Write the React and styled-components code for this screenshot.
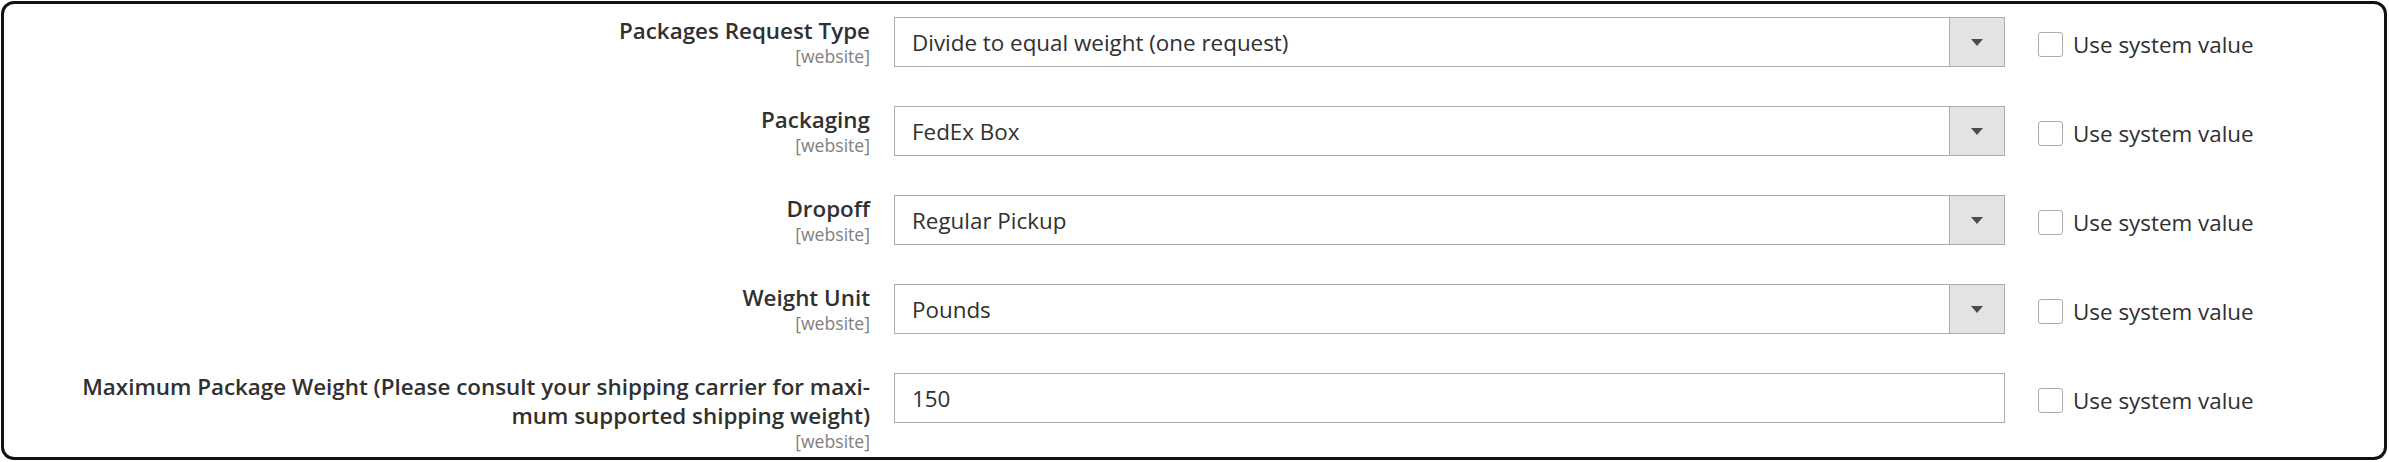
import React from "react";
import styled, { createGlobalStyle } from "styled-components";

const GlobalStyle = createGlobalStyle`
  html, body {
    margin: 0;
    padding: 0;
    background: #ffffff;
  }
  body {
    font-family: "Open Sans", "Liberation Sans", sans-serif;
    color: #303030;
  }
`;

// outer rounded frame around the config fieldset
const Frame = styled.div`
  box-sizing: border-box;
  width: 2386px;
  height: 459px;
  margin: 1px 0 0 1px;
  border: 3px solid #111;
  border-radius: 13px;
  background: #fff;
  padding-top: 13px;
  display: flex;
  flex-direction: column;
  gap: 37px;
`;

const Row = styled.div`
  display: grid;
  grid-template-columns: 866px 1111px auto;
  column-gap: 24px;
  align-items: start;
`;

const LabelCell = styled.div`
  box-sizing: border-box;
  padding-left: 50px;
  text-align: right;
`;

const LabelText = styled.div`
  font-size: 22.4px;
  line-height: 29px;
  font-weight: 600;
  color: #303030;
  margin-top: -1px;
`;

const Scope = styled.div`
  font-size: 17.6px;
  line-height: 23px;
  color: #808080;
`;

const Control = styled.div`
  box-sizing: border-box;
  height: 50px;
  display: flex;
  align-items: stretch;
  border: 1px solid #adadad;
  background: #fff;
`;

const Value = styled.div`
  flex: 1;
  display: flex;
  align-items: center;
  padding-left: 17px;
  font-size: 22.4px;
  color: #303030;
`;

const ArrowButton = styled.div`
  width: 54px;
  border-left: 1px solid #adadad;
  background: #e3e3e3;
  display: flex;
  align-items: center;
  justify-content: center;

  &::after {
    content: "";
    width: 0;
    height: 0;
    border-style: solid;
    border-width: 7px 6px 0 6px;
    border-color: #514943 transparent transparent transparent;
  }
`;

const UseSystem = styled.label`
  display: flex;
  align-items: center;
  gap: 10px;
  margin-left: 9px;
  height: 50px;
  margin-top: 2px;
  font-size: 22.4px;
  color: #303030;
`;

const Checkbox = styled.span`
  box-sizing: border-box;
  width: 25px;
  height: 25px;
  border: 1px solid #adadad;
  border-radius: 3px;
  background: #fff;
`;

const fields = [
  { label: "Packages Request Type", value: "Divide to equal weight (one request)", select: true },
  { label: "Packaging", value: "FedEx Box", select: true },
  { label: "Dropoff", value: "Regular Pickup", select: true },
  { label: "Weight Unit", value: "Pounds", select: true },
  {
    label: "Maximum Package Weight (Please consult your shipping carrier for maxi\u00ADmum supported shipping weight)",
    value: "150",
    select: false,
  },
];

function Field({ label, value, select }) {
  return (
    <Row>
      <LabelCell>
        <LabelText>{label}</LabelText>
        <Scope>[website]</Scope>
      </LabelCell>
      <Control>
        <Value>{value}</Value>
        {select && <ArrowButton />}
      </Control>
      <UseSystem>
        <Checkbox />
        Use system value
      </UseSystem>
    </Row>
  );
}

export default function App() {
  return (
    <>
      <GlobalStyle />
      <Frame>
        {fields.map((f, i) => (
          <Field key={i} {...f} />
        ))}
      </Frame>
    </>
  );
}
